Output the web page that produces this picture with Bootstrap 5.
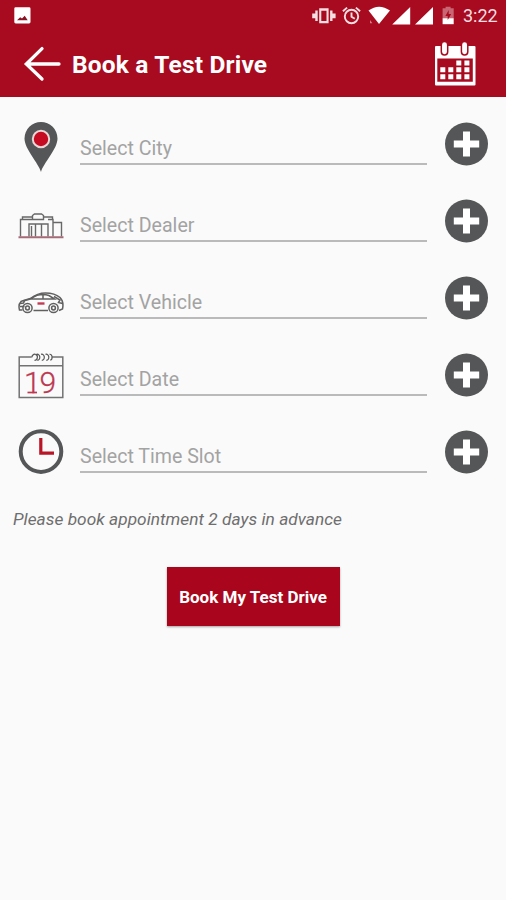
<!DOCTYPE html>
<html lang="en">
<head>
<meta charset="utf-8">
<meta name="viewport" content="width=device-width, initial-scale=1">
<title>Book a Test Drive</title>
<link href="https://cdn.jsdelivr.net/npm/bootstrap@5.3.0/dist/css/bootstrap.min.css" rel="stylesheet">
<style>
body{font-family:Roboto,"Liberation Sans",sans-serif;background:#fafafa;min-height:900px}
svg{display:block;flex:none}
.top{background:#a80b1f;height:97px;color:#fff}
.status{height:32px;padding:0 9px 0 13px}
.status-time{font-size:18px;line-height:32px;color:#f6dfe2;margin-left:7px;width:34px;white-space:nowrap}
.appbar{height:65px;padding:0 29px 0 23px}
.page-title{font-size:24.5px;font-weight:700;line-height:32px;margin-left:10px;letter-spacing:.18px;white-space:nowrap}
.form-rows{padding:9px 18px 0}
.entry{height:76.8px}
.field{height:59.400px;margin:0 18px 0 16px;border-bottom:2px solid #bababa;color:#a3a3a3;font-size:19.6px;line-height:24px;padding-bottom:2px}
.note{font-size:17.3px;line-height:24px;font-style:italic;color:#6e6e6e;margin:17px 0 0 13px;letter-spacing:.03px;white-space:nowrap}
.cta{width:173px;height:59px;background:#a9061d;font-size:17px;font-weight:700;color:#fff;margin-top:36.500px;box-shadow:0 1px 2px rgba(0,0,0,.35);white-space:nowrap}
.cta.btn{padding:1px 0 0}
.cta:hover{background:#8f0518;color:#fff}
</style>
</head>
<body>
<header class="top">
  <div class="status d-flex align-items-center">
    <svg width="20" height="32" viewBox="13 0 20 32"><rect x="14.3" y="7.3" width="16.2" height="16.2" rx="1.4" fill="#fff"/><path d="M17 20.3l3.2-3 1.8 1.3 2.7-2.9 3 4.6z" fill="#8a1222"/></svg>
    <svg class="ms-auto" width="146" height="32" viewBox="310 0 146 32" fill="#fff">
      <g fill="#f6dfe2"><path d="M319.2 8.3h9.4v15h-9.4zm2.1 2.4v10.2h5.2V10.700z" fill-rule="evenodd"/><path d="M315.300 10.600h2.400v10.400h-2.400zM312.200 13.400h3.200v4.900h-3.200zM330.100 10.600h2.400v10.400h-2.400zM332.400 13.400h3.200v4.900h-3.200z"/></g>
      <g fill="none" stroke="#f6dfe2" stroke-width="1.900"><circle cx="351.500" cy="16.500" r="6.700"/><path d="M351.500 12.500v4.300l3.300 2M342.900 11.200l4.200-3.600M360.100 11.200l-4.200-3.600"/></g>
      <path d="M368.500 10.500Q379 2.800 390 10.500L379 23.900z"/><path d="M370 20l2.400 3.300h-2.400z" fill="#d87a87"/>
      <path d="M410.200 7v17.400h-18zM433 7v17.400h-18z"/>
      <path d="M442.600 8.300h3V6.800h5v1.500h3.100v10h-11.100z" fill="#c96674"/><path d="M442.600 18.200h11.100v6h-11.100z"/><path d="M448.700 10l-3.300 6h2.300v4l3.500-6h-2.500z" fill="#a80b1f"/>
    </svg>
    <span class="status-time">3:22</span>
  </div>
  <div class="appbar d-flex align-items-center">
    <svg width="39" height="65" viewBox="23 32 39 65" fill="none" stroke="#fff" stroke-width="3.300" stroke-linecap="round"><path d="M59 64H27M42 48.600L26.300 64 42 79"/></svg>
    <h1 class="page-title mb-0">Book a Test Drive</h1>
    <svg class="ms-auto" width="44" height="65" viewBox="433 32 44 65"><path d="M436 46h38.500q1 0 1 1v37.500q0 1-1 1H436q-1 0-1-1V47q0-1 1-1z" fill="#fff"/><path d="M437.300 58.400h35.500v23.300h-35.500z" fill="#a80b1f"/><g fill="#fff" stroke="#a80b1f" stroke-width="1.500"><rect x="441.300" y="41.500" width="6.400" height="13.500" rx="3.200"/><rect x="461.400" y="41.500" width="6.400" height="13.500" rx="3.200"/></g><path fill="#fff" d="M456.300 60.500h5v5h-5zM464.400 60.500h5v5h-5zM440.300 67.300h5v5h-5zM448.300 67.300h5v5h-5zM456.300 67.300h5v5h-5zM464.400 67.300h5v5h-5zM440.300 74.300h5v5h-5zM448.300 74.300h5v5h-5zM456.300 74.300h5v5h-5zM464.400 74.300h5v5h-5z"/></svg>
  </div>
</header>
<main>
  <div class="form-rows">
    <div class="entry d-flex">
      <svg class="align-self-center" width="46" height="56" viewBox="0 0 46 56"><path d="M23 55.900C20.500 47 6.500 33 6.500 22.500a16.500 16.500 0 0 1 33 0C39.500 33 25.500 47 23 55.900z" fill="#555657"/><circle cx="23" cy="23" r="8.200" fill="#c50b22" stroke="#e9d7d7" stroke-width="2"/></svg>
      <div class="field flex-grow-1 d-flex align-items-end"><span class="lbl">Select City</span></div>
      <svg class="align-self-center" width="43" height="44" viewBox="0 0 43 44"><circle cx="21.500" cy="22" r="21.500" fill="#555657"/><path d="M18 9.500h7v9h9.200v7H25v9h-7v-9H8.800v-7H18z" fill="#fff"/></svg>
    </div>
    <div class="entry d-flex">
      <svg class="align-self-center" width="46" height="56" viewBox="0 0 46 56" fill="none" stroke="#686868" stroke-width="1.400"><path d="M2.500 43.500V26.500h12.500M30 26.500h5v17M35 29.500h8.500v14M4.500 26.500V24h9.500M14.500 26.500v-4l2-1.500h7l2 1.500v4zM26 24h8.500v2.500M11 43.500V31h19v12.500M17.500 31v12.500M23.500 31v12.500M13.500 33v10.500"/><path d="M0.500 44.300h45" stroke="#a56b77" stroke-width="2"/></svg>
      <div class="field flex-grow-1 d-flex align-items-end"><span class="lbl">Select Dealer</span></div>
      <svg class="align-self-center" width="43" height="44" viewBox="0 0 43 44"><circle cx="21.500" cy="22" r="21.500" fill="#555657"/><path d="M18 9.500h7v9h9.200v7H25v9h-7v-9H8.800v-7H18z" fill="#fff"/></svg>
    </div>
    <div class="entry d-flex">
      <svg class="align-self-center" width="46" height="56" viewBox="0 0 46 56" fill="none" stroke="#606060" stroke-width="1.500"><path d="M4.500 40H1.500c-.8-3-.5-6.500 1.500-8.500 3-1.800 7-2.200 9.500-3 4-3.200 7.500-5.500 15-5.500 6 0 11 1.500 14.500 4.500 2.500 2.500 3.500 7 2.500 11.500L41 40.500M15.500 40.500H30"/><path d="M12.500 28.700l6.500-3.300q6-1.800 12 .1l5.500 3.500zM25 24v4.500M12.500 29L5 31M36 26.500l6 3.500-1.500 2.500 4 1M2 33.500l3.500-.5 1-2M2 36.500h4.500"/><circle cx="9.500" cy="38" r="4.600"/><circle cx="9.500" cy="38" r="1.900"/><circle cx="35.500" cy="38" r="4.600"/><circle cx="35.500" cy="38" r="1.900"/><path d="M19.500 33.500h7" stroke="#c23b52" stroke-width="2.400"/></svg>
      <div class="field flex-grow-1 d-flex align-items-end"><span class="lbl">Select Vehicle</span></div>
      <svg class="align-self-center" width="43" height="44" viewBox="0 0 43 44"><circle cx="21.500" cy="22" r="21.500" fill="#555657"/><path d="M18 9.500h7v9h9.200v7H25v9h-7v-9H8.800v-7H18z" fill="#fff"/></svg>
    </div>
    <div class="entry d-flex">
      <svg class="align-self-center" width="46" height="56" viewBox="0 0 46 56" fill="none" stroke="#727272" stroke-width="1.500"><path d="M13 10H1.200v40.500h43.600V10H34M1.200 18.700h43.600"/><path d="M13.500 10.500q1.500-4 4-3.200c3 .8 2.300 6-1 6M18.500 7.300c4-1 4.500 6 .8 6M23 7.300c4-1 4.500 6 .8 6M27.500 7.300c4-1 4.500 6 .8 6M31.500 7.300c3-.5 3.500 5 .8 6" stroke="#585858" stroke-width="1.200"/><text x="6 21.500" y="46" font-family="Roboto" font-weight="300" font-size="30" fill="#bd3851" stroke="#bd3851" stroke-width=".3">19</text><path d="M9.500 45.500h9.500" stroke="#bd3851" stroke-width="1.700"/></svg>
      <div class="field flex-grow-1 d-flex align-items-end"><span class="lbl">Select Date</span></div>
      <svg class="align-self-center" width="43" height="44" viewBox="0 0 43 44"><circle cx="21.500" cy="22" r="21.500" fill="#555657"/><path d="M18 9.500h7v9h9.200v7H25v9h-7v-9H8.800v-7H18z" fill="#fff"/></svg>
    </div>
    <div class="entry d-flex">
      <svg class="align-self-center" width="46" height="56" viewBox="0 0 46 56" fill="none"><circle cx="23" cy="27.600" r="20.300" stroke="#555657" stroke-width="4"/><path d="M22.800 14v15.200H36" stroke="#b91527" stroke-width="3.200"/></svg>
      <div class="field flex-grow-1 d-flex align-items-end"><span class="lbl">Select Time Slot</span></div>
      <svg class="align-self-center" width="43" height="44" viewBox="0 0 43 44"><circle cx="21.500" cy="22" r="21.500" fill="#555657"/><path d="M18 9.500h7v9h9.200v7H25v9h-7v-9H8.800v-7H18z" fill="#fff"/></svg>
    </div>
  </div>
  <p class="note">Please book appointment 2 days in advance</p>
  <button type="button" class="cta btn rounded-0 border-0 d-block mx-auto">Book My Test Drive</button>
</main>
<script src="https://cdn.jsdelivr.net/npm/bootstrap@5.3.0/dist/js/bootstrap.bundle.min.js"></script>
</body>
</html>
